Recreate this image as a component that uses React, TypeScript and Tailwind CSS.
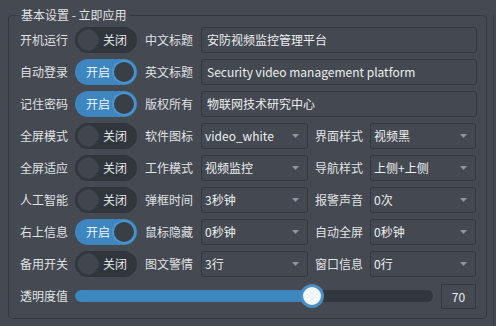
import React from "react";

const FONT = { fontFamily: '"Noto Sans CJK SC", "Noto Sans", sans-serif' };

function Switch({ on }: { on: boolean }) {
  if (on) {
    return (
      <div className="relative w-[62px] h-[26px] rounded-full bg-[#3d86bf] shrink-0">
        <span className="absolute left-[11px] top-0 h-[26px] leading-[26px] text-[12px] text-[#eef3f7]">开启</span>
        <span className="absolute right-[1px] top-[1px] w-[24px] h-[24px] rounded-full bg-[#3a3f47] border-2 border-[#4a95cf]" />
      </div>
    );
  }
  return (
    <div className="relative w-[62px] h-[26px] rounded-full bg-[#31353c] shrink-0">
      <span className="absolute left-[2px] top-[2px] w-[22px] h-[22px] rounded-full bg-[#41464e] border border-[#3b4047]" />
      <span className="absolute left-[28px] top-0 h-[26px] leading-[26px] text-[12px] text-[#e4e6e8]">关闭</span>
    </div>
  );
}

function Label({ children }: { children: React.ReactNode }) {
  return <div className="w-[48px] shrink-0 text-[12px] leading-[26px] text-[#e0e2e4] whitespace-nowrap">{children}</div>;
}

function Input({ value }: { value: string }) {
  return (
    <div className="flex-1 h-[26px] rounded-[3px] border border-[#33373e] bg-[#444951] px-[5px] text-[12px] leading-[24px] text-[#eceef0] whitespace-nowrap overflow-hidden">
      {value}
    </div>
  );
}

function Combo({ value, w }: { value: string; w: string }) {
  return (
    <div className={`${w} relative h-[26px] rounded-[3px] border border-[#33373e] bg-[#444951] pl-[3px] text-[12px] leading-[24px] text-[#eceef0] whitespace-nowrap shrink-0`}>
      {value}
      <svg className="absolute right-[8px] top-[10px]" width="7" height="4" viewBox="0 0 7 4">
        <path d="M0 0 L7 0 L3.5 4 Z" fill="#8f959c" />
      </svg>
    </div>
  );
}

export default function App() {
  const rows1: [string, boolean, string, string][] = [
    ["开机运行", false, "中文标题", "安防视频监控管理平台"],
    ["自动登录", true, "英文标题", "Security video management platform"],
    ["记住密码", true, "版权所有", "物联网技术研究中心"],
  ];
  const rows2: [string, boolean, string, string, string, string][] = [
    ["全屏模式", false, "软件图标", "video_white", "界面样式", "视频黑"],
    ["全屏适应", false, "工作模式", "视频监控", "导航样式", "上侧+上侧"],
    ["人工智能", false, "弹框时间", "3秒钟", "报警声音", "0次"],
    ["右上信息", true, "鼠标隐藏", "0秒钟", "自动全屏", "0秒钟"],
    ["备用开关", false, "图文警情", "3行", "窗口信息", "0行"],
  ];
  return (
    <div style={FONT} className="w-[496px] h-[326px] bg-[#444952] relative overflow-hidden">
      <div className="absolute right-[2px] top-[15px] bottom-0 w-[1px] bg-[#363a41]" />
      <div className="absolute left-[8px] top-[15px] w-[479px] h-[304px] rounded-[4px] border border-[#34383f]">
        <div className="absolute left-[9px] top-[-9px] px-[3px] bg-[#444952] text-[12px] leading-[16px] text-[#e0e2e4]">
          基本设置 - 立即应用
        </div>
        <div className="flex flex-col gap-[6px] pt-[11px] pl-[11px] pr-[9px]">
          {rows1.map(([l1, on, l2, v]) => (
            <div key={l1} className="flex items-center">
              <Label>{l1}</Label>
              <div className="w-[7px]" />
              <Switch on={on} />
              <div className="w-[8px]" />
              <Label>{l2}</Label>
              <div className="w-[8px]" />
              <Input value={v} />
            </div>
          ))}
          {rows2.map(([l1, on, l2, v2, l3, v3]) => (
            <div key={l1} className="flex items-center">
              <Label>{l1}</Label>
              <div className="w-[7px]" />
              <Switch on={on} />
              <div className="w-[8px]" />
              <Label>{l2}</Label>
              <div className="w-[8px]" />
              <Combo value={v2} w="w-[107px]" />
              <div className="w-[7px]" />
              <Label>{l3}</Label>
              <div className="w-[7px]" />
              <Combo value={v3} w="w-[106px]" />
            </div>
          ))}
          <div className="flex items-center">
            <Label>透明度值</Label>
            <div className="w-[7px]" />
            <div className="relative w-[358px] h-[12px] rounded-full bg-[#32363d] shrink-0">
              <div className="absolute left-0 top-0 h-[12px] w-[240px] rounded-full bg-[#3d86bf]" />
              <div className="absolute left-[225px] top-[-6px] w-[24px] h-[24px] rounded-full bg-[#f4f7fa] border-[3px] border-[#4a8fc4]" />
            </div>
            <div className="w-[8px]" />
            <div className="w-[35px] h-[25px] border border-[#34383f] text-center text-[12px] leading-[23px] text-[#eceef0]">70</div>
          </div>
        </div>
      </div>
    </div>
  );
}
